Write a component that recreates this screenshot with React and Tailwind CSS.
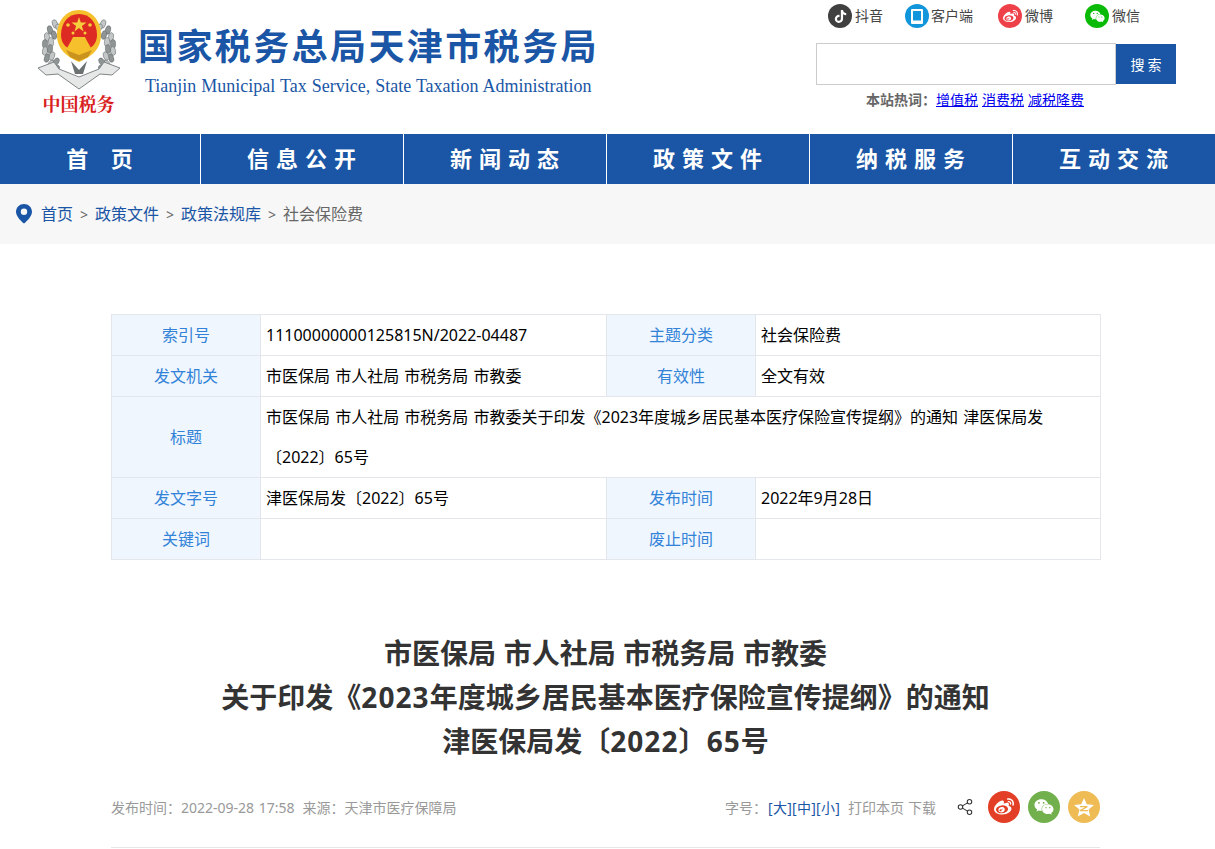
import { Share2 } from 'lucide-react'
import { FaTiktok, FaWeibo, FaWeixin } from 'react-icons/fa'

const navItems = ['首 页', '信息公开', '新闻动态', '政策文件', '纳税服务', '互动交流']

// wheat grains along the wreath, left side, mirrored for the right
const grains = [
  [17, 16, -20], [12, 22, -15], [9, 29, -8], [7, 36, 0], [7, 43, 8], [9, 50, 18], [13, 56, 30], [18, 61, 42],
  [21, 20, -30], [16, 27, -15], [13, 34, -5], [12, 41, 5], [14, 48, 18], [18, 54, 30],
]

const Emblem = () => (
  <svg width="82" height="84" viewBox="0 0 82 84">
    {grains.map(([x, y, r], i) => (
      <g key={i}>
        <ellipse cx={x} cy={y} rx="2.6" ry="4.4" transform={`rotate(${r} ${x} ${y})`} fill={i % 2 ? '#8f9494' : '#c3c7c7'} stroke="#5f6565" strokeWidth="0.5" />
        <ellipse cx={82 - x} cy={y} rx="2.6" ry="4.4" transform={`rotate(${-r} ${82 - x} ${y})`} fill={i % 2 ? '#8f9494' : '#c3c7c7'} stroke="#5f6565" strokeWidth="0.5" />
      </g>
    ))}
    <path d="M41 2 C54 2 63 13 63 27 C63 41 53 49 41 54 C29 49 19 41 19 27 C19 13 28 2 41 2 Z" fill="#f5c02c" />
    <path d="M41 6 C52 6 59 15 59 27 C59 33 56 38 52 40 L30 40 C26 38 23 33 23 27 C23 15 30 6 41 6 Z" fill="#dd2a22" />
    <path d="M41 9 L42.8 14.5 L48.5 14.5 L43.9 17.9 L45.6 23.4 L41 20 L36.4 23.4 L38.1 17.9 L33.5 14.5 L39.2 14.5 Z" fill="#f7cf3c" />
    <circle cx="30" cy="17" r="1.8" fill="#f7cf3c" />
    <circle cx="52" cy="17" r="1.8" fill="#f7cf3c" />
    <circle cx="35" cy="25" r="1.5" fill="#f7cf3c" />
    <circle cx="47" cy="25" r="1.5" fill="#f7cf3c" />
    <path d="M33 33 L35 29 L47 29 L49 33 L53 40 L29 40 Z" fill="#f5c02c" />
    <path d="M28 42 L41 47 L54 42 L50 49 L41 53 L32 49 Z" fill="#c9931d" />
    <path d="M0 60 L16 54 L21 61 L41 69 L61 61 L66 54 L82 60 L74 67 L62 66 L41 81 L20 66 L8 67 Z" fill="#e6e8e8" stroke="#7f8585" strokeWidth="1" />
    <path d="M33 53 L41 62 L49 53 L45 66 L37 66 Z" fill="#6b7070" />
  </svg>
)

const Pin = () => (
  <svg width="16" height="20" viewBox="0 0 16 20">
    <path fillRule="evenodd" d="M8 0 C12.4 0 16 3.4 16 7.7 C16 12 11.5 16.6 8 19.5 C4.5 16.6 0 12 0 7.7 C0 3.4 3.6 0 8 0 Z M8 4.6 A3.2 3.2 0 1 0 8 11 A3.2 3.2 0 1 0 8 4.6 Z" fill="#1a56a5" />
  </svg>
)

const Cell = ({ label }) => (
  <td className="border border-[#e3e6ea] bg-[#eff6fe] text-center text-[#3283d8] p-0">{label}</td>
)

const Val = ({ children, span }) => (
  <td colSpan={span} className="border border-[#e3e6ea] text-black px-[5px] py-0 leading-[40px]">{children}</td>
)

const App = () => {
  return (
    <div className="w-[1215px] h-[849px] overflow-hidden bg-white text-[16px] [word-spacing:1px] font-['Noto_Sans','Noto_Sans_CJK_SC',sans-serif]">
      {/* header */}
      <header className="h-[134px] flex">
        <div className="w-[138px] shrink-0 pl-[38px] pt-[8px]">
          <Emblem />
          <p className="w-[82px] pr-[1px] text-center text-[18px] leading-[22px] font-bold text-[#d8201c] whitespace-nowrap font-['Noto_Serif_CJK_SC','Noto_Sans_CJK_SC',serif]">中国税务</p>
        </div>
        <div className="w-[678px] shrink-0 pt-[21px]">
          <h1 className="text-[36px] leading-[52px] font-bold text-[#1a56a5] tracking-[2.4px] whitespace-nowrap">国家税务总局天津市税务局</h1>
          <p className="pl-[7px] mt-[1px] text-[18px] leading-[24px] [word-spacing:0.5px] text-[#1a56a5] whitespace-nowrap font-['Liberation_Serif',serif]">Tianjin Municipal Tax Service, State Taxation Administration</p>
        </div>
        <div className="w-[360px] shrink-0">
          <div className="flex items-center h-[24px] mt-[4px] pl-[12px] text-[14px] text-[#444]">
            <span className="w-[24px] h-[24px] rounded-full bg-[#404040] flex items-center justify-center text-white text-[13px]"><FaTiktok /></span>
            <span className="ml-[3px] pb-[1px] w-[50px]">抖音</span>
            <span className="w-[24px] h-[24px] rounded-full bg-[#1296db] flex items-center justify-center">
              <svg width="12" height="15" viewBox="0 0 12 15">
                <path fillRule="evenodd" d="M1 0 H11 A1 1 0 0 1 12 1 V14 A1 1 0 0 1 11 15 H1 A1 1 0 0 1 0 14 V1 A1 1 0 0 1 1 0 Z M2 2 V11.5 H10 V2 Z" fill="#fff" />
              </svg>
            </span>
            <span className="ml-[2px] pb-[1px] w-[67px]">客户端</span>
            <span className="w-[24px] h-[24px] rounded-full bg-[#ee4048] flex items-center justify-center text-white text-[15px]"><FaWeibo /></span>
            <span className="ml-[3px] pb-[1px] w-[60px]">微博</span>
            <span className="w-[24px] h-[24px] rounded-full bg-[#09bb07] flex items-center justify-center text-white text-[15px]"><FaWeixin /></span>
            <span className="ml-[3px] pb-[1px]">微信</span>
          </div>
          <div className="flex mt-[15px]">
            <input className="w-[300px] h-[42px] border border-[#cccccc] bg-white outline-none" />
            <button className="w-[60px] h-[40px] mt-[1px] pl-[3px] bg-[#1a56a5] text-white text-[14px] tracking-[3px]">搜索</button>
          </div>
          <div className="mt-[5px] pl-[50px] text-[14px] leading-[20px] whitespace-nowrap">
            <span className="font-bold text-[#666]">本站热词：</span>
            <a href="#" className="text-[#0000ee] underline">增值税</a>
            <a href="#" className="ml-[4px] text-[#0000ee] underline">消费税</a>
            <a href="#" className="ml-[4px] text-[#0000ee] underline">减税降费</a>
          </div>
        </div>
      </header>

      {/* nav */}
      <nav className="h-[50px] bg-[#1a56a5] flex">
        {navItems.map((item, i) => (
          <a
            key={item}
            href="#"
            className={`flex items-center justify-center pl-[6px] pb-[1px] text-white text-[22px] font-bold tracking-[7px] [word-spacing:3px] ${i === 0 ? 'w-[200px]' : 'w-[203px] border-l border-white'}`}
          >
            {item}
          </a>
        ))}
      </nav>

      {/* breadcrumb */}
      <div className="h-[60px] bg-[#f7f7f7] flex items-center pl-[16px] text-[16px] text-[#666]">
        <Pin />
        <a href="#" className="ml-[9px] text-[#1a56a5]">首页</a>
        <span className="mx-[7px] text-[14px]">&gt;</span>
        <a href="#" className="text-[#1a56a5]">政策文件</a>
        <span className="mx-[7px] text-[14px]">&gt;</span>
        <a href="#" className="text-[#1a56a5]">政策法规库</a>
        <span className="mx-[7px] text-[14px]">&gt;</span>
        <span>社会保险费</span>
      </div>

      {/* info table */}
      <div className="w-[989px] ml-[111px] mt-[70px]">
        <table className="w-[989px] table-fixed border-collapse">
          <colgroup>
            <col className="w-[149px]" />
            <col className="w-[346px]" />
            <col className="w-[149px]" />
            <col className="w-[345px]" />
          </colgroup>
          <tbody>
            <tr>
              <Cell label="索引号" />
              <Val>11100000000125815N/2022-04487</Val>
              <Cell label="主题分类" />
              <Val>社会保险费</Val>
            </tr>
            <tr>
              <Cell label="发文机关" />
              <Val>市医保局 市人社局 市税务局 市教委</Val>
              <Cell label="有效性" />
              <Val>全文有效</Val>
            </tr>
            <tr>
              <Cell label="标题" />
              <Val span={3}>市医保局 市人社局 市税务局 市教委关于印发《2023年度城乡居民基本医疗保险宣传提纲》的通知 津医保局发<br />〔2022〕65号</Val>
            </tr>
            <tr>
              <Cell label="发文字号" />
              <Val>津医保局发〔2022〕65号</Val>
              <Cell label="发布时间" />
              <Val>2022年9月28日</Val>
            </tr>
            <tr>
              <Cell label="关键词" />
              <Val><span className="invisible">-</span></Val>
              <Cell label="废止时间" />
              <Val><span className="invisible">-</span></Val>
            </tr>
          </tbody>
        </table>
      </div>

      {/* article title */}
      <h2 className="mt-[71px] w-[989px] ml-[111px] text-center text-[28px] leading-[44px] font-bold text-[#333] [word-spacing:0.4px]">
        市医保局 市人社局 市税务局 市教委<br />
        关于印发《<span className="tracking-[1.1px]">2023</span>年度城乡居民基本医疗保险宣传提纲》的通知<br />
        津医保局发〔<span className="tracking-[1.1px]">2022</span>〕<span className="tracking-[1.1px]">65</span>号
      </h2>

      {/* meta */}
      <div className="w-[989px] ml-[111px] mt-[27px] h-[34px] flex items-center text-[14px] text-[#999]">
        <span>发布时间：2022-09-28 17:58</span>
        <span className="ml-[8px]">来源：天津市医疗保障局</span>
        <div className="ml-auto flex items-center">
          <span className="mr-[1px]">字号：</span>
          <span className="text-[#1a56a5] tracking-[0.25px]">[大][中][小]</span>
          <span className="ml-[8px]">打印本页</span>
          <span className="ml-[4px]">下载</span>
          <Share2 size={18} strokeWidth={1.4} className="ml-[20px] text-[#333]" />
          <span className="ml-[14px] w-[32px] h-[32px] rounded-full bg-[#e33e26] flex items-center justify-center text-white text-[20px]"><FaWeibo /></span>
          <span className="ml-[8px] w-[32px] h-[32px] rounded-full bg-[#71b04c] flex items-center justify-center text-white text-[20px]"><FaWeixin /></span>
          <span className="ml-[8px] w-[32px] h-[32px] rounded-full bg-[#eebb55] flex items-center justify-center">
            <svg width="20" height="19" viewBox="0 0 20 19">
              <path d="M10 0 L12.8 6.3 L20 7 L14.6 11.6 L16.2 18.6 L10 15 L3.8 18.6 L5.4 11.6 L0 7 L7.2 6.3 Z" fill="#fff" />
              <path d="M6 8 H13.5 V9.2 L8.5 12 H14 V13.3 H5.8 V12 L10.8 9.2 H6 Z" fill="#eebb55" />
            </svg>
          </span>
        </div>
      </div>
      <div className="w-[989px] ml-[111px] mt-[23px] border-t border-[#e6e6e6]" />
    </div>
  )
}

export default App
